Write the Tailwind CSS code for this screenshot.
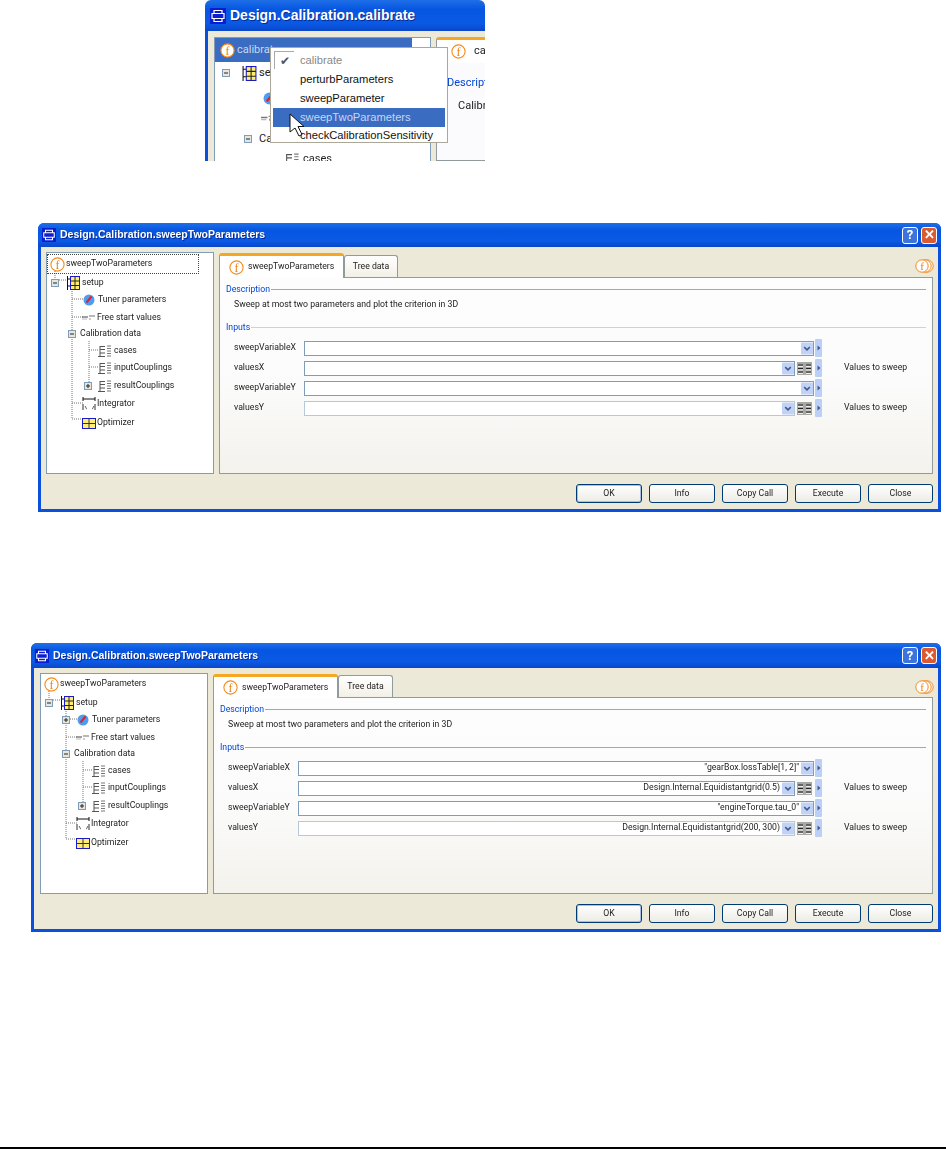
<!DOCTYPE html>
<html lang="en">

<head>
    <meta charset="UTF-8">
    <title>Design.Calibration dialogs</title>
    <script src="https://cdn.jsdelivr.net/npm/@tailwindcss/browser@4"></script>
</head>

<body class="bg-white">
    <!-- shared icons -->
    <svg class="hidden" xmlns="http://www.w3.org/2000/svg">
        <symbol id="i-win" viewBox="0 0 16 16">
            <rect width="16" height="16" fill="#0a1ecf" />
            <path d="M4 2.500h8v3H4zM2 5.500h12v5H2zM4 10.500h8v3H4z" fill="none" stroke="#fff" stroke-width="1.200" />
        </symbol>
        <symbol id="i-f" viewBox="0 0 15 15">
            <circle cx="7.500" cy="7.500" r="6.600" fill="#fff" stroke="#f28a1e" stroke-width="1.100" />
            <text x="7.500" y="11.500" text-anchor="middle" font-family="Liberation Serif, serif" font-size="12" fill="#e8801a">f</text>
        </symbol>
        <symbol id="i-minus" viewBox="0 0 8 8">
            <rect x=".5" y=".5" width="7" height="7" fill="#e6e6e0" stroke="#7f9db9" />
            <path d="M2 4h4" stroke="#222" />
        </symbol>
        <symbol id="i-plus" viewBox="0 0 8 8">
            <rect x=".5" y=".5" width="7" height="7" fill="#e6e6e0" stroke="#7f9db9" />
            <path d="M2 4h4M4 2v4" stroke="#222" />
        </symbol>
        <symbol id="i-setup" viewBox="0 0 13 14">
            <path d="M.5 0v14M.5 3h4M.5 10h4" stroke="#111" fill="none" />
            <rect x="3.500" y=".5" width="9" height="13" fill="#ffee70" stroke="#1a1acc" />
            <path d="M3.500 5h9M3.500 9.500h9M8 .5v13" stroke="#222" />
        </symbol>
        <symbol id="i-tuner" viewBox="0 0 12 12">
            <circle cx="6" cy="6" r="5.500" fill="#4d9cf0" />
            <path d="M3.500 8.500 8.500 2.500" stroke="#e0202a" stroke-width="2" />
        </symbol>
        <symbol id="i-free" viewBox="0 0 13 5">
            <path d="M0 2h6" stroke="#777" stroke-width="1.400" />
            <path d="M0 4h5" stroke="#bbb" />
            <path d="M7 1h6" stroke="#888" stroke-width="1.200" />
            <path d="M8 3v2" stroke="#999" />
        </symbol>
        <symbol id="i-data" viewBox="0 0 13 12">
            <path d="M2 1.500h5M2 1v10M0 11.500h7M2 4.500h5M2 8h5" stroke="#555" fill="none" />
            <path d="M9 1h4M9 3.500h4M9 6h4M9 8.500h4M9 11h4" stroke="#777" />
        </symbol>
        <symbol id="i-integ" viewBox="0 0 14 14">
            <path d="M1 2h12M1 0v4M13 0v4" stroke="#111" fill="none" />
            <path d="M1 7v6M13 7v6" stroke="#333" />
            <path d="M3 9c1 1 1 3 2 3M10 12c1 0 1-2 2-3" stroke="#555" fill="none" />
        </symbol>
        <symbol id="i-opt" viewBox="0 0 14 11">
            <rect x=".5" y=".5" width="13" height="10" fill="#ffee70" stroke="#1a1acc" />
            <path d="M.5 5.500h13M7 .5v10" stroke="#333" />
        </symbol>
        <symbol id="i-many" viewBox="0 0 19 14">
            <circle cx="12" cy="7" r="6.200" fill="#fff" stroke="#f28a1e" />
            <circle cx="10" cy="7" r="6.200" fill="#fff" stroke="#f28a1e" />
            <circle cx="7" cy="7" r="6.200" fill="#fff" stroke="#f28a1e" />
            <text x="7" y="11" text-anchor="middle" font-family="Liberation Serif, serif" font-size="11" fill="#e8801a">f</text>
        </symbol>
        <symbol id="i-down" viewBox="0 0 13 13">
            <rect width="13" height="13" rx="1" fill="#c1d2f7" />
            <path d="M3.500 5 6.500 8 9.500 5" fill="none" stroke="#46598a" stroke-width="1.700" />
        </symbol>
        <symbol id="i-grid" viewBox="0 0 15 13">
            <rect width="15" height="13" fill="#a9a9a4" />
            <path d="M1 3h5M9 3h5M1 6.500h5M9 6.500h5M1 10h5M9 10h5" stroke="#222" stroke-width="1.200" />
            <path d="M1 4.500h5M9 4.500h5M1 8h5M9 8h5M1 11.500h5M9 11.500h5" stroke="#eee" />
        </symbol>
        <symbol id="i-right" viewBox="0 0 7 18">
            <rect width="7" height="18" rx="1" fill="#bccff6" />
            <path d="M2.500 6.500v5l3-2.500z" fill="#46598a" />
        </symbol>
    </svg>

    <div class="flex flex-col h-[1149px] overflow-hidden font-['Roboto',sans-serif] text-[8.700px] text-[#222]">

        <!-- small window with the function menu -->
        <section class="relative ml-[205px] w-[280px] h-[161px] shrink-0 overflow-hidden rounded-t-md bg-[#ece9d8] blur-[0.3px]">
            <div class="flex items-center gap-[4px] h-[31px] pl-[5px] bg-[linear-gradient(#1f6fe8,#0656e2_30%,#0a5ae6_75%,#0a46c8)]">
                <svg class="w-[16px] h-[16px]"><use href="#i-win" /></svg>
                <span class="font-bold font-['Liberation_Sans',sans-serif] text-[14px] text-white [text-shadow:1px_1px_#0a2a90]">Design.Calibration.calibrate</span>
            </div>
            <div class="flex gap-[5px] h-[130px] pt-[6px] pl-[6px] border-l-[3px] border-[#0a50dc]">
                <div class="w-[217px] shrink-0 h-[130px] bg-white border border-[#7f9db9] text-[11px]">
                    <div class="flex items-center w-[197px] h-[24px] pl-[5px] gap-[2px] bg-[#3a6cc2] text-[#c8d8f0]">
                        <svg class="w-[15px] h-[15px]"><use href="#i-f" /></svg>calibrate
                    </div>
                    <div class="flex items-center h-5 mt-[1px] pl-[7px]">
                        <svg class="w-[8px] h-[8px]"><use href="#i-minus" /></svg>
                        <svg class="w-[15px] h-[15px] ml-[12px]"><use href="#i-setup" /></svg>
                        <span class="ml-[2px]">setup</span>
                    </div>
                    <div class="flex items-center h-5 mt-[5px] pl-[48px]">
                        <svg class="w-[13px] h-[13px]"><use href="#i-tuner" /></svg>
                    </div>
                    <div class="flex items-center h-5 pl-[46px]">
                        <svg class="w-[14px] h-[6px]"><use href="#i-free" /></svg>
                    </div>
                    <div class="flex items-center h-5 mt-[1px] pl-[29px]">
                        <svg class="w-[8px] h-[8px]"><use href="#i-minus" /></svg>
                        <span class="ml-[7px]">Calibration data</span>
                    </div>
                    <div class="flex items-center h-5 pl-[69px]">
                        <svg class="w-[15px] h-[13px]"><use href="#i-data" /></svg>
                        <span class="ml-[4px]">cases</span>
                    </div>
                </div>
                <div class="flex-1 min-w-0 text-[11px]">
                    <div class="flex items-center w-[140px] h-[26px] pl-[14px] gap-[8px] bg-white rounded-t-[3px] border-t-[3px] border-x border-t-[#f5a623] border-x-[#919b9c]">
                        <svg class="w-[15px] h-[15px] shrink-0"><use href="#i-f" /></svg>calibrate
                    </div>
                    <div class="w-[140px] h-[98px] bg-[#fbfbfd] border border-t-0 border-[#919b9c] pt-[12px] pl-[10px]">
                        <div class="text-[#0046d5]">Description</div>
                        <div class="mt-[6px] pl-[11px]">Calibrate the model</div>
                    </div>
                </div>
            </div>

            <!-- open menu -->
            <div class="absolute left-[65px] top-[47px] w-[178px] h-[96px] pt-[3px] bg-white border border-[#aca899] font-['Liberation_Sans',sans-serif] text-[11.200px] text-[#111]">
                <div class="relative flex items-center h-[19px] pl-[29px] text-[#888]">
                    <span class="absolute left-[3px] top-0 w-[20px] h-[18px] flex items-center justify-center text-[#555] text-[12px] border-t border-l border-[#aaa]">✔</span>
                    calibrate
                </div>
                <div class="flex items-center h-[19px] pl-[29px]">perturbParameters</div>
                <div class="flex items-center h-[19px] pl-[29px]">sweepParameter</div>
                <div class="flex items-center h-[19px] mx-[2px] pl-[27px] bg-[#3a6cc2] text-[#c6d6f2]">sweepTwoParameters</div>
                <div class="flex items-center h-[17px] pl-[29px]">checkCalibrationSensitivity</div>
            </div>
            <svg class="absolute left-[84px] top-[113px] w-[15px] h-[24px]" viewBox="0 0 15 24"><path d="M1 1v18l5-4 4 8 3-1.500-4-8h6z" fill="#fff" stroke="#111" /></svg>
        </section>

        <!-- first dialog: empty inputs -->
        <section class="flex flex-col shrink-0 ml-[38px] mt-[62px] w-[903px] h-[289px] rounded-t-md bg-[#0a50dc] blur-[0.3px]">
            <div class="flex items-center h-[24px] pl-[4px] pr-[4px] gap-[4px] rounded-t-md bg-[linear-gradient(#1f6fe8,#0656e2_30%,#0a5ae6_75%,#0a46c8)]">
                <svg class="w-[14px] h-[14px]"><use href="#i-win" /></svg>
                <span class="font-bold font-['Liberation_Sans',sans-serif] text-[10.500px] text-white [text-shadow:1px_1px_#0a2a90]">Design.Calibration.sweepTwoParameters</span>
                <span class="ml-auto flex gap-[3px]">
                    <span class="flex items-center justify-center w-[16px] h-[17px] rounded-[3px] border border-white bg-[#3c74dc] font-bold text-[13px] text-white">?</span>
                    <span class="flex items-center justify-center w-[16px] h-[17px] rounded-[3px] border border-white bg-[#dc5a30] font-bold text-[13px] text-white">✕</span>
                </span>
            </div>
            <div class="flex-1 mx-[3px] mb-[3px] px-[5px] pt-[5px] bg-[#ece9d8]">
                <div class="flex gap-[5px] h-[222px]">
                    <div class="relative w-[168px] shrink-0 pt-[1px] bg-white border border-[#7f9db9]">
                        <svg class="absolute inset-0 w-full h-full" fill="none" stroke="#777" stroke-dasharray="1 1">
                            <path d="M8 14v12M12 27h7M25 34v132M25 46h11M25 64h11M25 150h11M25 166h11M42 88v44M42 97h10M42 114h10" />
                        </svg>
                        <div class="relative flex items-center h-[20px] pl-[2px] mr-[14px] gap-[1px] border border-dotted border-[#444]">
                            <svg class="w-[15px] h-[15px]"><use href="#i-f" /></svg>sweepTwoParameters
                        </div>
                        <div class="relative flex items-center h-[17px] pl-[4px]">
                            <svg class="w-[8px] h-[8px]"><use href="#i-minus" /></svg>
                            <svg class="w-[13px] h-[14px] ml-[8px]"><use href="#i-setup" /></svg>
                            <span class="ml-[2px]">setup</span>
                        </div>
                        <div class="relative flex items-center h-[18px] pl-[36px]">
                            <svg class="w-[12px] h-[12px]"><use href="#i-tuner" /></svg>
                            <span class="ml-[3px]">Tuner parameters</span>
                        </div>
                        <div class="relative flex items-center h-[17px] pl-[35px]">
                            <svg class="w-[13px] h-[5px]"><use href="#i-free" /></svg>
                            <span class="ml-[2px]">Free start values</span>
                        </div>
                        <div class="relative flex items-center h-[16px] pl-[21px]">
                            <svg class="w-[8px] h-[8px]"><use href="#i-minus" /></svg>
                            <span class="ml-[4px]">Calibration data</span>
                        </div>
                        <div class="relative flex items-center h-[17px] pl-[51px]">
                            <svg class="w-[13px] h-[12px]"><use href="#i-data" /></svg>
                            <span class="ml-[3px]">cases</span>
                        </div>
                        <div class="relative flex items-center h-[18px] pl-[51px]">
                            <svg class="w-[13px] h-[12px]"><use href="#i-data" /></svg>
                            <span class="ml-[3px]">inputCouplings</span>
                        </div>
                        <div class="relative flex items-center h-[18px] pl-[37px]">
                            <svg class="w-[8px] h-[8px]"><use href="#i-plus" /></svg>
                            <svg class="w-[13px] h-[12px] ml-[6px]"><use href="#i-data" /></svg>
                            <span class="ml-[3px]">resultCouplings</span>
                        </div>
                        <div class="relative flex items-center h-[18px] pl-[35px]">
                            <svg class="w-[14px] h-[14px]"><use href="#i-integ" /></svg>
                            <span class="ml-[1px]">Integrator</span>
                        </div>
                        <div class="relative flex items-center h-[20px] pl-[35px]">
                            <svg class="w-[14px] h-[11px]"><use href="#i-opt" /></svg>
                            <span class="ml-[1px]">Optimizer</span>
                        </div>
                    </div>
                    <div class="flex-1 min-w-0 flex flex-col">
                        <div class="relative flex items-end h-[25px] shrink-0 z-10">
                            <div class="flex items-center w-[125px] h-[25px] -mb-px pl-[9px] gap-[4px] bg-white rounded-t-[3px] border-x border-t-[3px] border-t-[#f5a623] border-x-[#919b9c]">
                                <svg class="w-[15px] h-[15px] shrink-0"><use href="#i-f" /></svg>sweepTwoParameters
                            </div>
                            <div class="flex items-center justify-center w-[54px] h-[22px] bg-[linear-gradient(#fff,#f2f0e6)] rounded-t-[3px] border-x border-t border-[#919b9c]">Tree data</div>
                            <svg class="ml-auto mr-[-1px] mb-[4px] w-[19px] h-[14px]"><use href="#i-many" /></svg>
                        </div>
                        <div class="flex-1 flex flex-col pt-[6px] px-[6px] bg-[linear-gradient(#fdfdfe,#fbfbfb_55%,#f3f2ec)] border border-[#919b9c]">
                            <div class="flex items-center gap-[1px] h-[11px] text-[#0046d5]">Description<span class="flex-1 h-px bg-[#aca899]"></span></div>
                            <div class="mt-[3px] pl-[8px] h-[12px]">Sweep at most two parameters and plot the criterion in 3D</div>
                            <div class="flex items-center gap-[1px] h-[11px] mt-[12px] text-[#0046d5]">Inputs<span class="flex-1 h-px bg-[#d2d2ca]"></span></div>
                            <div class="flex flex-col -mr-[6px] mt-[5px] pl-[8px]">
                                <div class="flex items-center h-[20px]">
                                    <span class="w-[70px] shrink-0">sweepVariableX</span>
                                    <span class="flex-1 flex items-center justify-end h-[15px] bg-white border border-[#7f9db9]"><svg class="w-[12px] h-[13px]"><use href="#i-down" /></svg></span>
                                    <svg class="ml-px w-[7px] h-[18px]"><use href="#i-right" /></svg>
                                    <span class="w-[110px] pl-[22px]"></span>
                                </div>
                                <div class="flex items-center h-[20px]">
                                    <span class="w-[70px] shrink-0">valuesX</span>
                                    <span class="flex-1 flex items-center justify-end h-[15px] bg-white border border-[#7f9db9]"><svg class="w-[12px] h-[13px]"><use href="#i-down" /></svg></span>
                                    <svg class="ml-[2px] mr-[2px] w-[15px] h-[13px]"><use href="#i-grid" /></svg>
                                    <svg class="ml-px w-[7px] h-[18px]"><use href="#i-right" /></svg>
                                    <span class="w-[110px] pl-[22px]">Values to sweep</span>
                                </div>
                                <div class="flex items-center h-[20px]">
                                    <span class="w-[70px] shrink-0">sweepVariableY</span>
                                    <span class="flex-1 flex items-center justify-end h-[15px] bg-white border border-[#7f9db9]"><svg class="w-[12px] h-[13px]"><use href="#i-down" /></svg></span>
                                    <svg class="ml-px w-[7px] h-[18px]"><use href="#i-right" /></svg>
                                    <span class="w-[110px] pl-[22px]"></span>
                                </div>
                                <div class="flex items-center h-[20px]">
                                    <span class="w-[70px] shrink-0">valuesY</span>
                                    <span class="flex-1 flex items-center justify-end h-[15px] bg-white border border-[#b5c9da]"><svg class="w-[12px] h-[13px]"><use href="#i-down" /></svg></span>
                                    <svg class="ml-[2px] mr-[2px] w-[15px] h-[13px]"><use href="#i-grid" /></svg>
                                    <svg class="ml-px w-[7px] h-[18px]"><use href="#i-right" /></svg>
                                    <span class="w-[110px] pl-[22px]">Values to sweep</span>
                                </div>
                            </div>
                        </div>
                    </div>
                </div>
                <div class="flex justify-end gap-[7px] mt-[10px]">
                    <button class="w-[66px] h-[19px] rounded-[3px] border border-[#003c74] bg-[linear-gradient(#fff,#ecebe4)] shadow-[inset_0_0_0_1px_#a8c0e8]">OK</button>
                    <button class="w-[66px] h-[19px] rounded-[3px] border border-[#003c74] bg-[linear-gradient(#fff,#ecebe4)]">Info</button>
                    <button class="w-[66px] h-[19px] rounded-[3px] border border-[#003c74] bg-[linear-gradient(#fff,#ecebe4)]">Copy Call</button>
                    <button class="w-[66px] h-[19px] rounded-[3px] border border-[#003c74] bg-[linear-gradient(#fff,#ecebe4)]">Execute</button>
                    <button class="w-[65px] h-[19px] rounded-[3px] border border-[#003c74] bg-[linear-gradient(#fff,#ecebe4)]">Close</button>
                </div>
            </div>
        </section>

        <!-- second dialog: filled inputs -->
        <section class="flex flex-col shrink-0 ml-[31px] mt-[131px] w-[910px] h-[289px] rounded-t-md bg-[#0a50dc] blur-[0.3px]">
            <div class="flex items-center h-[25px] pl-[4px] pr-[4px] gap-[4px] rounded-t-md bg-[linear-gradient(#1f6fe8,#0656e2_30%,#0a5ae6_75%,#0a46c8)]">
                <svg class="w-[14px] h-[14px]"><use href="#i-win" /></svg>
                <span class="font-bold font-['Liberation_Sans',sans-serif] text-[10.500px] text-white [text-shadow:1px_1px_#0a2a90]">Design.Calibration.sweepTwoParameters</span>
                <span class="ml-auto flex gap-[3px]">
                    <span class="flex items-center justify-center w-[16px] h-[17px] rounded-[3px] border border-white bg-[#3c74dc] font-bold text-[13px] text-white">?</span>
                    <span class="flex items-center justify-center w-[16px] h-[17px] rounded-[3px] border border-white bg-[#dc5a30] font-bold text-[13px] text-white">✕</span>
                </span>
            </div>
            <div class="flex-1 mx-[3px] mb-[3px] px-[6px] pr-[5px] pt-[5px] bg-[#ece9d8]">
                <div class="flex gap-[5px] h-[221px]">
                    <div class="relative w-[168px] shrink-0 bg-white border border-[#7f9db9]">
                        <svg class="absolute inset-0 w-full h-full" fill="none" stroke="#777" stroke-dasharray="1 1">
                            <path d="M8 13v12M12 26h7M25 33v132M29 45h7M25 63h11M25 149h11M25 165h11M42 87v44M42 96h10M42 113h10" />
                        </svg>
                        <div class="relative flex items-center h-[20px] pl-[3px] gap-[1px]">
                            <svg class="w-[15px] h-[15px]"><use href="#i-f" /></svg>sweepTwoParameters
                        </div>
                        <div class="relative flex items-center h-[17px] pl-[4px]">
                            <svg class="w-[8px] h-[8px]"><use href="#i-minus" /></svg>
                            <svg class="w-[13px] h-[14px] ml-[8px]"><use href="#i-setup" /></svg>
                            <span class="ml-[2px]">setup</span>
                        </div>
                        <div class="relative flex items-center h-[18px] pl-[21px]">
                            <svg class="w-[8px] h-[8px]"><use href="#i-plus" /></svg>
                            <svg class="w-[12px] h-[12px] ml-[7px]"><use href="#i-tuner" /></svg>
                            <span class="ml-[3px]">Tuner parameters</span>
                        </div>
                        <div class="relative flex items-center h-[17px] pl-[35px]">
                            <svg class="w-[13px] h-[5px]"><use href="#i-free" /></svg>
                            <span class="ml-[2px]">Free start values</span>
                        </div>
                        <div class="relative flex items-center h-[16px] pl-[21px]">
                            <svg class="w-[8px] h-[8px]"><use href="#i-minus" /></svg>
                            <span class="ml-[4px]">Calibration data</span>
                        </div>
                        <div class="relative flex items-center h-[17px] pl-[51px]">
                            <svg class="w-[13px] h-[12px]"><use href="#i-data" /></svg>
                            <span class="ml-[3px]">cases</span>
                        </div>
                        <div class="relative flex items-center h-[18px] pl-[51px]">
                            <svg class="w-[13px] h-[12px]"><use href="#i-data" /></svg>
                            <span class="ml-[3px]">inputCouplings</span>
                        </div>
                        <div class="relative flex items-center h-[18px] pl-[37px]">
                            <svg class="w-[8px] h-[8px]"><use href="#i-plus" /></svg>
                            <svg class="w-[13px] h-[12px] ml-[6px]"><use href="#i-data" /></svg>
                            <span class="ml-[3px]">resultCouplings</span>
                        </div>
                        <div class="relative flex items-center h-[18px] pl-[35px]">
                            <svg class="w-[14px] h-[14px]"><use href="#i-integ" /></svg>
                            <span class="ml-[1px]">Integrator</span>
                        </div>
                        <div class="relative flex items-center h-[20px] pl-[35px]">
                            <svg class="w-[14px] h-[11px]"><use href="#i-opt" /></svg>
                            <span class="ml-[1px]">Optimizer</span>
                        </div>
                    </div>
                    <div class="flex-1 min-w-0 flex flex-col">
                        <div class="relative flex items-end h-[24px] shrink-0 z-10">
                            <div class="flex items-center w-[125px] h-[24px] -mb-px pl-[9px] gap-[4px] bg-white rounded-t-[3px] border-x border-t-[3px] border-t-[#f5a623] border-x-[#919b9c]">
                                <svg class="w-[15px] h-[15px] shrink-0"><use href="#i-f" /></svg>sweepTwoParameters
                            </div>
                            <div class="flex items-center justify-center w-[55px] h-[22px] bg-[linear-gradient(#fff,#f2f0e6)] rounded-t-[3px] border-x border-t border-[#919b9c]">Tree data</div>
                            <svg class="ml-auto mr-[-1px] mb-[3px] w-[19px] h-[14px]"><use href="#i-many" /></svg>
                        </div>
                        <div class="flex-1 flex flex-col pt-[6px] px-[6px] bg-[linear-gradient(#fdfdfe,#fbfbfb_55%,#f3f2ec)] border border-[#919b9c]">
                            <div class="flex items-center gap-[1px] h-[11px] text-[#0046d5]">Description<span class="flex-1 h-px bg-[#aca899]"></span></div>
                            <div class="mt-[3px] pl-[8px] h-[12px]">Sweep at most two parameters and plot the criterion in 3D</div>
                            <div class="flex items-center gap-[1px] h-[11px] mt-[12px] text-[#0046d5]">Inputs<span class="flex-1 h-px bg-[#aca899]"></span></div>
                            <div class="flex flex-col -mr-[6px] mt-[5px] pl-[8px]">
                                <div class="flex items-center h-[20px]">
                                    <span class="w-[70px] shrink-0">sweepVariableX</span>
                                    <span class="flex-1 flex items-center justify-end gap-[2px] h-[15px] bg-white border border-[#7f9db9]">"gearBox.lossTable[1, 2]"<svg class="w-[12px] h-[13px]"><use href="#i-down" /></svg></span>
                                    <svg class="ml-px w-[7px] h-[18px]"><use href="#i-right" /></svg>
                                    <span class="w-[110px] pl-[22px]"></span>
                                </div>
                                <div class="flex items-center h-[20px]">
                                    <span class="w-[70px] shrink-0">valuesX</span>
                                    <span class="flex-1 flex items-center justify-end gap-[2px] h-[15px] bg-white border border-[#7f9db9]">Design.Internal.Equidistantgrid(0.5)<svg class="w-[12px] h-[13px]"><use href="#i-down" /></svg></span>
                                    <svg class="ml-[2px] mr-[2px] w-[15px] h-[13px]"><use href="#i-grid" /></svg>
                                    <svg class="ml-px w-[7px] h-[18px]"><use href="#i-right" /></svg>
                                    <span class="w-[110px] pl-[22px]">Values to sweep</span>
                                </div>
                                <div class="flex items-center h-[20px]">
                                    <span class="w-[70px] shrink-0">sweepVariableY</span>
                                    <span class="flex-1 flex items-center justify-end gap-[2px] h-[15px] bg-white border border-[#7f9db9]">"engineTorque.tau_0"<svg class="w-[12px] h-[13px]"><use href="#i-down" /></svg></span>
                                    <svg class="ml-px w-[7px] h-[18px]"><use href="#i-right" /></svg>
                                    <span class="w-[110px] pl-[22px]"></span>
                                </div>
                                <div class="flex items-center h-[20px]">
                                    <span class="w-[70px] shrink-0">valuesY</span>
                                    <span class="flex-1 flex items-center justify-end gap-[2px] h-[15px] bg-white border border-[#b5c9da]">Design.Internal.Equidistantgrid(200, 300)<svg class="w-[12px] h-[13px]"><use href="#i-down" /></svg></span>
                                    <svg class="ml-[2px] mr-[2px] w-[15px] h-[13px]"><use href="#i-grid" /></svg>
                                    <svg class="ml-px w-[7px] h-[18px]"><use href="#i-right" /></svg>
                                    <span class="w-[110px] pl-[22px]">Values to sweep</span>
                                </div>
                            </div>
                        </div>
                    </div>
                </div>
                <div class="flex justify-end gap-[7px] mt-[10px]">
                    <button class="w-[66px] h-[19px] rounded-[3px] border border-[#003c74] bg-[linear-gradient(#fff,#ecebe4)] shadow-[inset_0_0_0_1px_#a8c0e8]">OK</button>
                    <button class="w-[66px] h-[19px] rounded-[3px] border border-[#003c74] bg-[linear-gradient(#fff,#ecebe4)]">Info</button>
                    <button class="w-[66px] h-[19px] rounded-[3px] border border-[#003c74] bg-[linear-gradient(#fff,#ecebe4)]">Copy Call</button>
                    <button class="w-[66px] h-[19px] rounded-[3px] border border-[#003c74] bg-[linear-gradient(#fff,#ecebe4)]">Execute</button>
                    <button class="w-[65px] h-[19px] rounded-[3px] border border-[#003c74] bg-[linear-gradient(#fff,#ecebe4)]">Close</button>
                </div>
            </div>
        </section>

        <!-- page footer rule -->
        <div class="mt-auto h-[2px] bg-black"></div>
    </div>
</body>

</html>
